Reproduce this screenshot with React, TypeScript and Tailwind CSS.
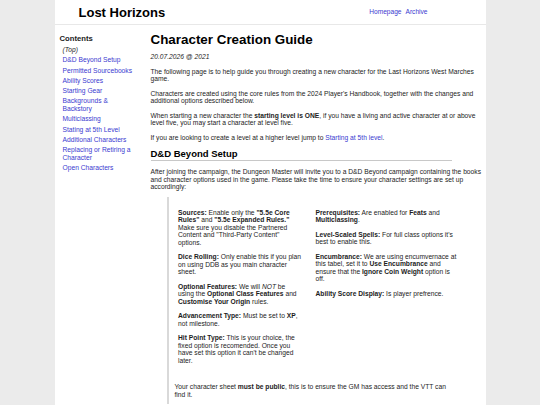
const contents = [
  "D&D Beyond Setup",
  "Permitted Sourcebooks",
  "Ability Scores",
  "Starting Gear",
  "Backgrounds & Backstory",
  "Multiclassing",
  "Stating at 5th Level",
  "Additional Characters",
  "Replacing or Retiring a Character",
  "Open Characters",
];

const link = "text-[#3a3ad0]";

export default function App() {
  return (
    <div className="min-h-screen bg-[#ebebeb] font-['Liberation_Sans',Arial,sans-serif] text-[6.7px] leading-[7.5px] text-[#1c1c1c]">
      <div className="mx-auto min-h-screen w-[431px] bg-white">
        <header className="flex h-[25px] items-center border-b border-[#e8e8e8] pl-[24px] pr-[58px]">
          <h1 className="text-[13px] font-bold leading-[15px] text-black">Lost Horizons</h1>
          <nav className="ml-auto flex gap-[4px] text-[6.6px]">
            <a className={link}>Homepage</a>
            <a className={link}>Archive</a>
          </nav>
        </header>

        <div className="flex">
          <aside className="w-[96px] shrink-0 pl-[5px] pr-[15px] pt-[9px]">
            <h2 className="text-[7.7px] font-bold leading-[9px]">Contents</h2>
            <ul className="ml-[3px] mt-[3px]">
              <li className="italic">(Top)</li>
              {contents.map((c) => (
                <li key={c} className={`mt-[2.8px] ${link}`}>
                  {c}
                </li>
              ))}
            </ul>
          </aside>

          <main className="w-[335px] pr-[4px] pt-[7px]">
            <h1 className="text-[13.4px] font-bold leading-[15.4px] text-black">Character Creation Guide</h1>
            <p className="mt-[6px] italic">20.07.2026 @ 2021</p>
            <p className="mt-[7px]">
              The following page is to help guide you through creating a new character for the Last Horizons West
              Marches game.
            </p>
            <p className="mt-[7px]">
              Characters are created using the core rules from the 2024 Player's Handbook, together with the changes and
              additional options described below.
            </p>
            <p className="mt-[7px]">
              When starting a new character the <b>starting level is ONE</b>, if you have a living and active character
              at or above level five, you may start a character at level five.
            </p>
            <p className="mt-[7px]">
              If you are looking to create a level at a higher level jump to <a className={link}>Starting at 5th level</a>.
            </p>

            <h2 className="mt-[7px] w-[301px] border-b border-[#c8c8c8] pb-[1px] text-[9.5px] font-bold leading-[11px] text-black">
              D&amp;D Beyond Setup
            </h2>
            <p className="mt-[7px]">
              After joining the campaign, the Dungeon Master will invite you to a D&amp;D Beyond campaign containing the
              books and character options used in the game. Please take the time to ensure your character settings are
              set up accordingly:
            </p>

            {/* settings table, two columns of notes */}
            <blockquote className="ml-[16px] mt-[6px] border-l-2 border-[#d9d9d9] pl-[6px]">
              <div className="w-[282px]">
                <div className="ml-[3.5px] flex gap-[12.5px] pb-[12px] pt-[12px]">
                  <div className="flex w-[125px] flex-col gap-[7px]">
                    <p>
                      <b>Sources:</b> Enable only the <b>"5.5e Core Rules"</b> and <b>"5.5e Expanded Rules."</b> Make
                      sure you disable the Partnered Content and "Third-Party Content" options.
                    </p>
                    <p>
                      <b>Dice Rolling:</b> Only enable this if you plan on using DDB as you main character sheet.
                    </p>
                    <p>
                      <b>Optional Features:</b> We will <i>NOT</i> be using the <b>Optional Class Features</b> and{" "}
                      <b>Customise Your Origin</b> rules.
                    </p>
                    <p>
                      <b>Advancement Type:</b> Must be set to <b>XP</b>, not milestone.
                    </p>
                    <p>
                      <b>Hit Point Type:</b> This is your choice, the fixed option is recomended. Once you have set this
                      option it can't be changed later.
                    </p>
                  </div>
                  <div className="flex w-[141px] flex-col gap-[7px]">
                    <p>
                      <b>Prerequisites:</b> Are enabled for <b>Feats</b> and <b>Multiclassing</b>.
                    </p>
                    <p>
                      <b>Level-Scaled Spells:</b> For full class options it's best to enable this.
                    </p>
                    <p>
                      <b>Encumbrance:</b> We are using encumvernace at this tabel, set it to <b>Use Encumbrance</b> and
                      ensure that the <b>Ignore Coin Weight</b> option is off.
                    </p>
                    <p>
                      <b>Ability Score Display:</b> Is player prefrence.
                    </p>
                  </div>
                </div>
                <p className="mt-[7px] pb-[6px]">
                  Your character sheet <b>must be public</b>, this is to ensure the GM has access and the VTT can find it.
                </p>
              </div>
            </blockquote>
          </main>
        </div>
      </div>
    </div>
  );
}
